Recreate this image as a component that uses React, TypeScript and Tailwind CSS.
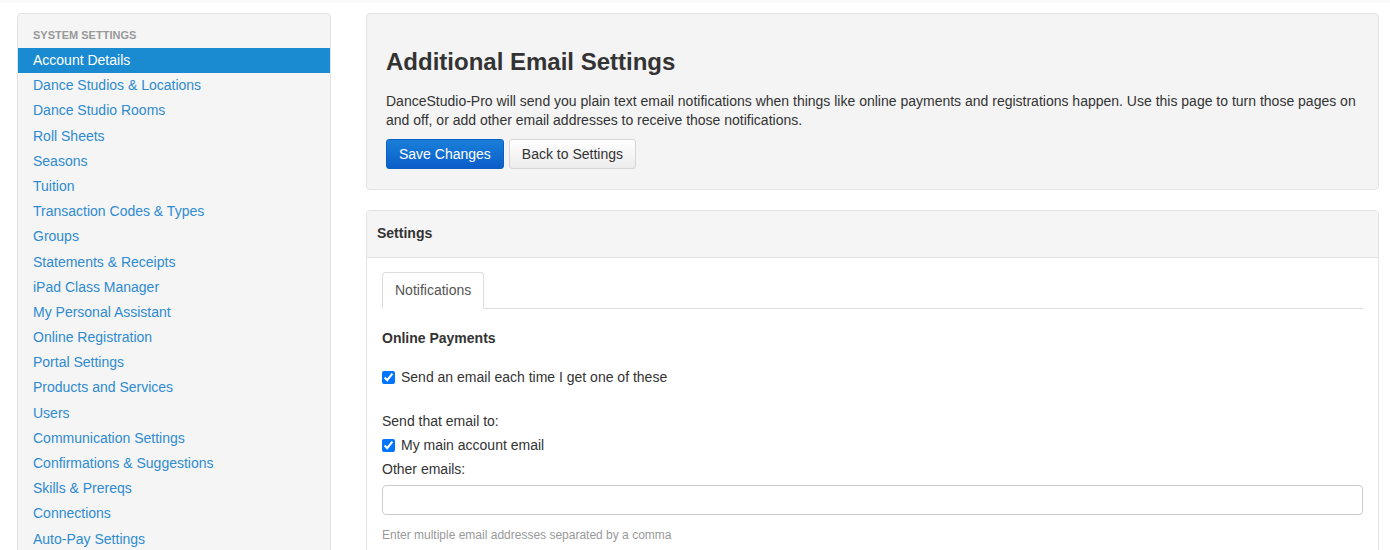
const NAV = [
  "Account Details",
  "Dance Studios & Locations",
  "Dance Studio Rooms",
  "Roll Sheets",
  "Seasons",
  "Tuition",
  "Transaction Codes & Types",
  "Groups",
  "Statements & Receipts",
  "iPad Class Manager",
  "My Personal Assistant",
  "Online Registration",
  "Portal Settings",
  "Products and Services",
  "Users",
  "Communication Settings",
  "Confirmations & Suggestions",
  "Skills & Prereqs",
  "Connections",
  "Auto-Pay Settings",
];

function Sidebar() {
  return (
    <aside className="w-[314px] shrink-0 rounded border border-[#e3e3e3] bg-[#f5f5f5] pt-[13px] pb-3">
      <div className="px-[15px] pb-[5px] text-[11px] font-bold uppercase leading-4 text-[#999]">
        System Settings
      </div>
      <ul>
        {NAV.map((item, i) => (
          <li
            key={item}
            className={
              i === 0
                ? "h-[25.2px] bg-[#1a8bd1] px-[15px] text-[14px] leading-[25.2px] text-white"
                : "h-[25.2px] px-[15px] text-[14px] leading-[25.2px] text-[#2e8bd0]"
            }
          >
            {item}
          </li>
        ))}
      </ul>
    </aside>
  );
}

function Check({ label }: { label: string }) {
  return (
    <label className="flex items-center gap-[6px]">
      <input
        type="checkbox"
        defaultChecked
        className="m-0 h-[13px] w-[13px] accent-[#0075ff]"
      />
      <span>{label}</span>
    </label>
  );
}

export default function App() {
  return (
    <div
      className="min-h-[550px] bg-white text-[14px] text-[#333]"
      style={{ fontFamily: '"Liberation Sans", Arial, sans-serif' }}
    >
      <div className="h-[3px] bg-[#fafafa]" />
      <div className="flex gap-[35px] pl-[17px] pr-[11px] pt-[10px]">
        <Sidebar />
        <main className="flex min-w-0 flex-1 flex-col gap-5">
          <section className="rounded border border-[#e3e3e3] bg-[#f4f4f4] px-[19px] pt-[33px] pb-[20px]">
            <h1 className="text-[24px] font-bold leading-[30px] text-[#333]">
              Additional Email Settings
            </h1>
            <p className="mt-[15px] leading-[19px]">
              DanceStudio-Pro will send you plain text email notifications when things like online
              payments and registrations happen. Use this page to turn those pages on and off, or
              add other email addresses to receive those notifications.
            </p>
            <div className="mt-[9px] flex gap-[5px]">
              <button className="h-[30px] rounded-[3px] border border-[#0a5fc2] bg-gradient-to-b from-[#1a7fd8] to-[#0c5ec9] px-3 text-[14px] text-white">
                Save Changes
              </button>
              <button className="h-[30px] rounded-[3px] border border-[#d6d6d6] bg-gradient-to-b from-white to-[#ececec] px-3 text-[14px] text-[#333]">
                Back to Settings
              </button>
            </div>
          </section>

          <section className="overflow-hidden rounded border border-[#e3e3e3] bg-white">
            <div className="flex h-[47px] items-center border-b border-[#e3e3e3] bg-[#f5f5f5] px-[10px] pb-[2px] font-bold">
              Settings
            </div>
            <div className="px-[15px] pt-[14px] pb-4">
              <div className="flex border-b border-[#ddd]">
                <div className="-mb-px h-[37px] rounded-t border border-b-white border-[#ddd] bg-white px-3 leading-[35px] text-[#555]">
                  Notifications
                </div>
              </div>
              <h3 className="mt-[21px] font-bold leading-4">Online Payments</h3>
              <div className="mt-[21px]">
                <Check label="Send an email each time I get one of these" />
              </div>
              <div className="mt-[23px] leading-5">Send that email to:</div>
              <div className="mt-[4px]">
                <Check label="My main account email" />
              </div>
              <div className="mt-[3px] leading-5">Other emails:</div>
              <input
                type="text"
                className="mt-[6px] block h-[30px] w-full rounded border border-[#ccc] bg-white px-2 outline-none"
              />
              <div className="mt-[12px] text-[12px] leading-4 text-[#999]">
                Enter multiple email addresses separated by a comma
              </div>
            </div>
          </section>
        </main>
      </div>
    </div>
  );
}
